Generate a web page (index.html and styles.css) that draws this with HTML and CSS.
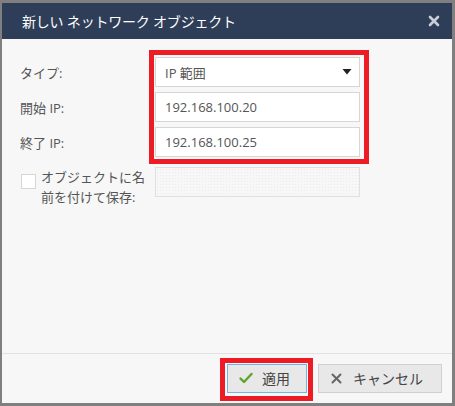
FILE: index.html
```html
<!DOCTYPE html>
<html lang="ja">
<head>
<meta charset="utf-8">
<link rel="stylesheet" href="styles.css">
</head>
<body>
<div class="dialog">
  <div class="titlebar">
    <span class="title">新しい ネットワーク オブジェクト</span>
    <span class="close">
      <svg width="12" height="12" viewBox="0 0 12 12"><path d="M2 2 L10 10 M10 2 L2 10" stroke="#c9ced8" stroke-width="2.6" stroke-linecap="round"/></svg>
    </span>
  </div>
  <div class="content">
    <div class="form">
      <div class="label">タイプ:</div>
      <div class="field select">
        <span>IP 範囲</span>
        <svg class="caret" width="10" height="6" viewBox="0 0 10 6"><path d="M0.5 0 L9.5 0 L5 5.5 Z" fill="#222"/></svg>
      </div>
      <div class="label">開始 IP:</div>
      <div class="field">192.168.100.20</div>
      <div class="label">終了 IP:</div>
      <div class="field">192.168.100.25</div>
      <div class="label check-label">
        <span class="checkbox"></span>
        <span class="check-text">オブジェクトに名<br>前を付けて保存:</span>
      </div>
      <div class="field disabled"></div>
      <div class="annot annot-fields"></div>
    </div>
  </div>
  <div class="footer">
    <div class="btn-wrap">
      <button class="btn apply">
        <svg width="14" height="12" viewBox="0 0 14 12"><path d="M1.5 6.5 L5 10 L12.5 2" fill="none" stroke="#5ea52a" stroke-width="2.4" stroke-linecap="round" stroke-linejoin="round"/></svg>
        <span>適用</span>
      </button>
      <div class="annot annot-btn"></div>
    </div>
    <button class="btn cancel">
      <svg width="11" height="11" viewBox="0 0 11 11"><path d="M1.5 1.5 L9.5 9.5 M9.5 1.5 L1.5 9.5" stroke="#666" stroke-width="2" stroke-linecap="round"/></svg>
      <span>キャンセル</span>
    </button>
  </div>
</div>
</body>
</html>
```

FILE: styles.css
```css
html, body {
  margin: 0;
  padding: 0;
}
body {
  background: #7f7f7f;
  width: 455px;
  height: 406px;
  overflow: hidden;
  font-family: "Open Sans", "Noto Sans CJK JP", sans-serif;
}
.dialog {
  margin: 3px 0 0 2px;
  width: 450px;
  height: 400px;
  background: #f7f7f7;
  display: flex;
  flex-direction: column;
}
.titlebar {
  height: 36px;
  background: #2f3e58;
  display: flex;
  align-items: center;
  justify-content: space-between;
  padding: 0 12px 0 20px;
}
.title {
  color: #ffffff;
  font-size: 14px;
  letter-spacing: -0.2px;
}
.close {
  display: flex;
  align-items: center;
}
.content {
  flex: 1;
}
.form {
  position: relative;
  display: grid;
  grid-template-columns: 135px 205px;
  grid-template-rows: 30px 30px 30px 45px;
  row-gap: 5px;
  padding: 18px 0 0 18px;
}
.label {
  font-size: 13px;
  color: #555;
  display: flex;
  align-items: center;
}
.field {
  box-sizing: border-box;
  background: #fff;
  border: 1px solid #d6d6d6;
  font-size: 13px;
  color: #555;
  display: flex;
  align-items: center;
  padding-left: 9px;
  height: 30px;
}
.select {
  justify-content: space-between;
  padding-right: 7px;
}
.caret {
  display: block;
}
.check-label {
  align-items: flex-start;
  margin-top: 5px;
  height: 40px;
}
.checkbox {
  box-sizing: border-box;
  width: 15px;
  height: 15px;
  background: #fff;
  border: 1px solid #d6d6d6;
  margin: 7px 5px 0 1px;
  flex: none;
}
.check-text {
  line-height: 20px;
}
.field.disabled {
  margin-top: 5px;
  background-color: #f7f7f7;
  background-image: radial-gradient(#ececec 0.6px, transparent 0.7px);
  background-size: 3px 3px;
  border-color: #e0e0e0;
}
.annot {
  position: absolute;
  box-sizing: border-box;
  border: 5px solid #ed1c24;
  pointer-events: none;
}
.annot-fields {
  left: 147px;
  top: 11px;
  width: 220px;
  height: 114px;
}
.footer {
  border-top: 1px solid #e2e2e2;
  height: 50px;
  box-sizing: border-box;
  display: flex;
  justify-content: flex-end;
  align-items: center;
  gap: 11px;
  padding: 0 10px 1px 0;
}
.btn-wrap {
  position: relative;
  display: flex;
}
.btn {
  box-sizing: border-box;
  height: 29px;
  background: #e8e8e8;
  border: 1px solid #d0d0d0;
  font-family: "Open Sans", "Noto Sans CJK JP", sans-serif;
  font-size: 14px;
  color: #444;
  display: flex;
  align-items: center;
  gap: 9px;
  padding: 0;
  margin: 0;
}
.apply {
  width: 80px;
  border-color: #6cb8e6;
  padding-left: 11px;
}
.cancel {
  width: 124px;
  padding-left: 12px;
  gap: 11px;
}
.annot-btn {
  left: -7px;
  top: -6px;
  width: 93px;
  height: 43px;
}
```
